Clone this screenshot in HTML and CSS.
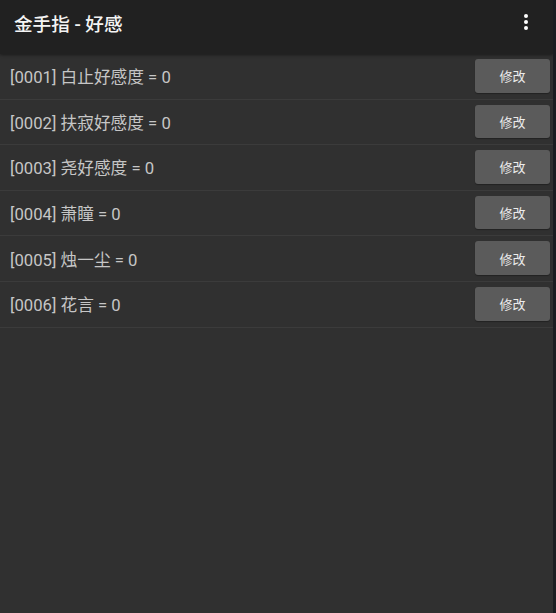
FILE: index.html
```html
<!DOCTYPE html>
<html lang="zh">
<head>
<meta charset="utf-8">
<link rel="stylesheet" href="styles.css">
</head>
<body>
<div class="app">
  <header class="toolbar">
    <h1 class="title">金手指 - 好感</h1>
    <svg class="menu" width="6" height="18" viewBox="0 0 6 18" aria-hidden="true">
      <circle cx="3" cy="3" r="2" fill="#fff"/>
      <circle cx="3" cy="9" r="2" fill="#fff"/>
      <circle cx="3" cy="15" r="2" fill="#fff"/>
    </svg>
  </header>
  <ul class="list">
    <li class="row"><span class="label">[0001] 白止好感度 = 0</span><button class="edit">修改</button></li>
    <li class="row"><span class="label">[0002] 扶寂好感度 = 0</span><button class="edit">修改</button></li>
    <li class="row"><span class="label">[0003] 尧好感度 = 0</span><button class="edit">修改</button></li>
    <li class="row"><span class="label">[0004] 萧瞳 = 0</span><button class="edit">修改</button></li>
    <li class="row"><span class="label">[0005] 烛一尘 = 0</span><button class="edit">修改</button></li>
    <li class="row"><span class="label">[0006] 花言 = 0</span><button class="edit">修改</button></li>
  </ul>
</div>
</body>
</html>
```

FILE: styles.css
```css
html, body {
  margin: 0;
  padding: 0;
  height: 100%;
  background: #303030;
}
body {
  font-family: Roboto, "Noto Sans CJK SC", sans-serif;
  border-right: 3px solid #1b1d21;
  box-sizing: border-box;
  overflow: hidden;
}
.app {
  display: flex;
  flex-direction: column;
  height: 100%;
}
.toolbar {
  height: 54px;
  flex: none;
  background: #212121;
  display: flex;
  align-items: center;
  justify-content: space-between;
  padding: 0 24px 0 14px;
  box-sizing: border-box;
  box-shadow: 0 1px 3px rgba(0,0,0,0.45);
  position: relative;
  z-index: 1;
}
.title {
  margin: 0;
  font-size: 18.6px;
  font-weight: 500;
  color: #f4f4f4;
  margin-top: -10px;
}
.menu {
  margin-top: -10px;
}
.list {
  list-style: none;
  margin: 0;
  padding: 0;
}
.row {
  height: 44.6px;
  border-bottom: 1px solid #3b3b3b;
  display: flex;
  align-items: center;
  justify-content: space-between;
  padding: 0 3px 0 10px;
}
.label {
  font-size: 16.7px;
  color: #c6c6c6;
}
.edit {
  width: 75px;
  height: 33.5px;
  margin-top: -1px;
  border: none;
  border-radius: 3px;
  background: #5b5b5b;
  color: #ececec;
  font-family: Roboto, "Noto Sans CJK SC", sans-serif;
  font-size: 13px;
  padding: 0;
  box-shadow: 0 1px 1px rgba(0,0,0,0.3);
}
```
